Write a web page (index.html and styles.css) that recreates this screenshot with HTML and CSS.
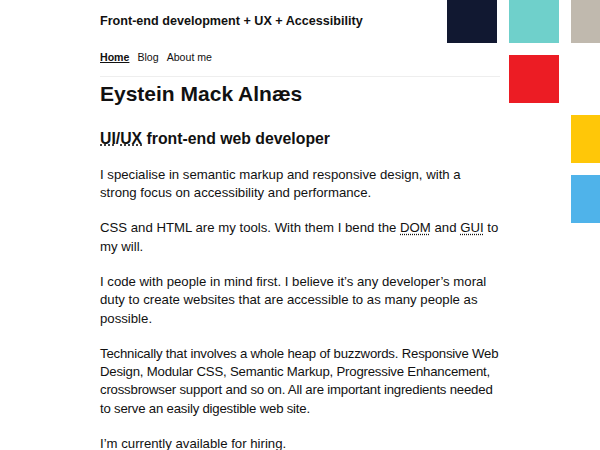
FILE: index.html
```html
<!DOCTYPE html>
<html lang="en">
<head>
<meta charset="utf-8">
<title>Eystein Mack Alnæs</title>
<link rel="stylesheet" href="styles.css">
</head>
<body>
<div class="squares" aria-hidden="true">
  <span class="sq navy"></span><span class="sq teal"></span><span class="sq beige"></span>
  <span class="sq empty"></span><span class="sq red"></span><span class="sq empty"></span>
  <span class="sq empty"></span><span class="sq empty"></span><span class="sq yellow"></span>
  <span class="sq empty"></span><span class="sq empty"></span><span class="sq blue"></span>
</div>
<div class="page">
  <header class="site-header">
    <p class="tagline">Front-end development + UX + Accessibility</p>
    <nav class="nav">
      <a class="nav-link current" href="#">Home</a>
      <a class="nav-link" href="#">Blog</a>
      <a class="nav-link" href="#">About me</a>
    </nav>
  </header>
  <main class="content">
    <h1 class="title">Eystein Mack Alnæs</h1>
    <h2 class="subtitle"><abbr title="User Interface">UI</abbr>/<abbr title="User Experience">UX</abbr> front-end web developer</h2>
    <p>I specialise in semantic markup and responsive design, with a strong focus on accessibility and performance.</p>
    <p>CSS and HTML are my tools. With them I bend the <abbr title="Document Object Model">DOM</abbr> and <abbr title="Graphical User Interface">GUI</abbr> to my will.</p>
    <p>I code with people in mind first. I believe it’s any developer’s moral duty to create websites that are accessible to as many people as possible.</p>
    <p class="tight">Technically that involves a whole heap of buzzwords. Responsive Web Design, Modular CSS, Semantic Markup, Progressive Enhancement, crossbrowser support and so on. All are important ingredients needed to serve an easily digestible web site.</p>
    <p>I’m currently available for hiring.</p>
  </main>
</div>
</body>
</html>
```
FILE: styles.css
```css
html, body {
  margin: 0;
  padding: 0;
  background: #fff;
  color: #111;
  font-family: "Liberation Sans", Arial, sans-serif;
}
.squares {
  position: absolute;
  top: -5px;
  left: 447px;
  display: grid;
  grid-template-columns: repeat(3, 50px);
  grid-auto-rows: 48px;
  column-gap: 12px;
  row-gap: 12px;
}
.sq { display: block; }
.navy { background: #111831; }
.teal { background: #6fd0cb; }
.beige { background: #c0b9ae; }
.red { background: #ec1c24; }
.yellow { background: #ffc708; }
.blue { background: #4fb3ea; }
.page {
  width: 400px;
  margin-left: 100px;
}
.site-header {
  border-bottom: 1px solid #eee;
}
.tagline {
  margin: 0;
  padding-top: 13px;
  font-size: 12.6px;
  font-weight: bold;
  line-height: 16px;
}
.nav {
  display: flex;
  gap: 8px;
  padding: 21px 0 12px;
  font-size: 10.6px;
  line-height: 14px;
}
.nav-link {
  color: #111;
  text-decoration: none;
}
.nav-link.current {
  font-weight: bold;
  text-decoration: underline;
}
.content {
  padding-top: 3.5px;
}
.title {
  margin: 0;
  font-size: 21px;
  line-height: 26px;
}
.subtitle {
  margin: 22px 0 17.5px;
  font-size: 15.8px;
  line-height: 20px;
}
abbr {
  text-decoration: underline dotted;
}
.content p {
  margin: 0 0 16.6px;
  font-size: 13.2px;
  line-height: 18.4px;
}
.content p.tight {
  letter-spacing: -0.2px;
}
```
